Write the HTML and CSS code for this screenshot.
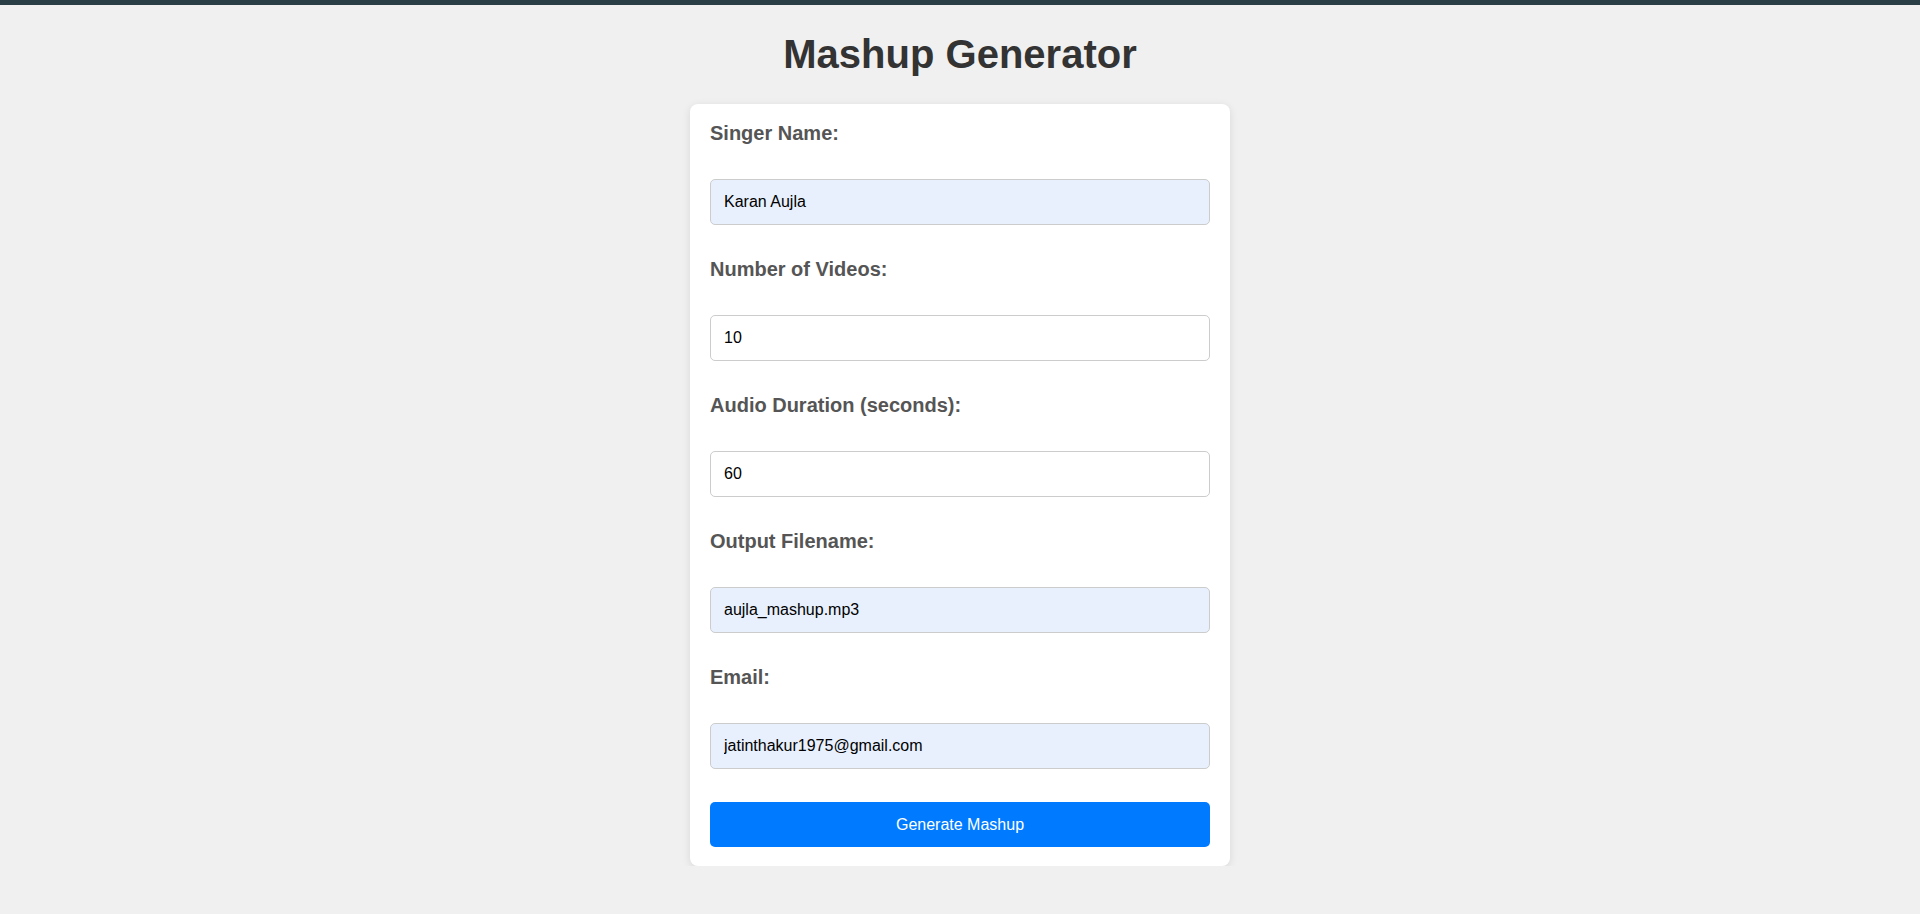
FILE: index.html
```html
<!DOCTYPE html>
<html lang="en">
<head>
<meta charset="utf-8">
<title>Mashup Generator</title>
<link rel="stylesheet" href="styles.css">
</head>
<body>
<div class="topbar"></div>
<main class="page">
  <h1 class="title">Mashup Generator</h1>
  <form class="card">
    <label class="label" for="singer">Singer Name:</label>
    <input class="field filled" id="singer" type="text" value="Karan Aujla">
    <label class="label" for="videos">Number of Videos:</label>
    <input class="field" id="videos" type="number" value="10">
    <label class="label" for="duration">Audio Duration (seconds):</label>
    <input class="field" id="duration" type="number" value="60">
    <label class="label" for="output">Output Filename:</label>
    <input class="field filled" id="output" type="text" value="aujla_mashup.mp3">
    <label class="label" for="email">Email:</label>
    <input class="field filled" id="email" type="email" value="jatinthakur1975@gmail.com">
    <button class="submit" type="button">Generate Mashup</button>
  </form>
</main>
</body>
</html>
```

FILE: styles.css
```css
* {
  box-sizing: border-box;
}

html, body {
  margin: 0;
  padding: 0;
}

body {
  background: #f0f0f0;
  font-family: "Liberation Sans", Arial, sans-serif;
  color: #333;
}

.topbar {
  height: 5px;
  background: #293f45;
}

.page {
  display: flex;
  flex-direction: column;
  align-items: center;
}

.title {
  margin: 26px 0 27px;
  font-size: 40px;
  line-height: 46px;
  font-weight: bold;
  color: #333;
}

.card {
  width: 540px;
  background: #fff;
  border-radius: 8px;
  box-shadow: 0 2px 8px rgba(0, 0, 0, 0.1);
  padding: 18px 20px 19px;
  display: flex;
  flex-direction: column;
  gap: 33.5px;
}

.label {
  display: block;
  font-size: 20px;
  line-height: 23px;
  font-weight: bold;
  color: #555;
}

.field {
  width: 100%;
  height: 46px;
  padding: 0 13px;
  font-family: "Liberation Sans", Arial, sans-serif;
  font-size: 16px;
  color: #000;
  background: #fff;
  border: 1px solid #ccc;
  border-radius: 5px;
  outline: none;
}

.field.filled {
  background: #e8f0fe;
}

.field::-webkit-outer-spin-button,
.field::-webkit-inner-spin-button {
  -webkit-appearance: none;
  margin: 0;
}

.submit {
  width: 100%;
  height: 45px;
  background: #007bff;
  color: #fff;
  border: none;
  border-radius: 5px;
  font-family: "Liberation Sans", Arial, sans-serif;
  font-size: 16px;
  cursor: pointer;
}
```
